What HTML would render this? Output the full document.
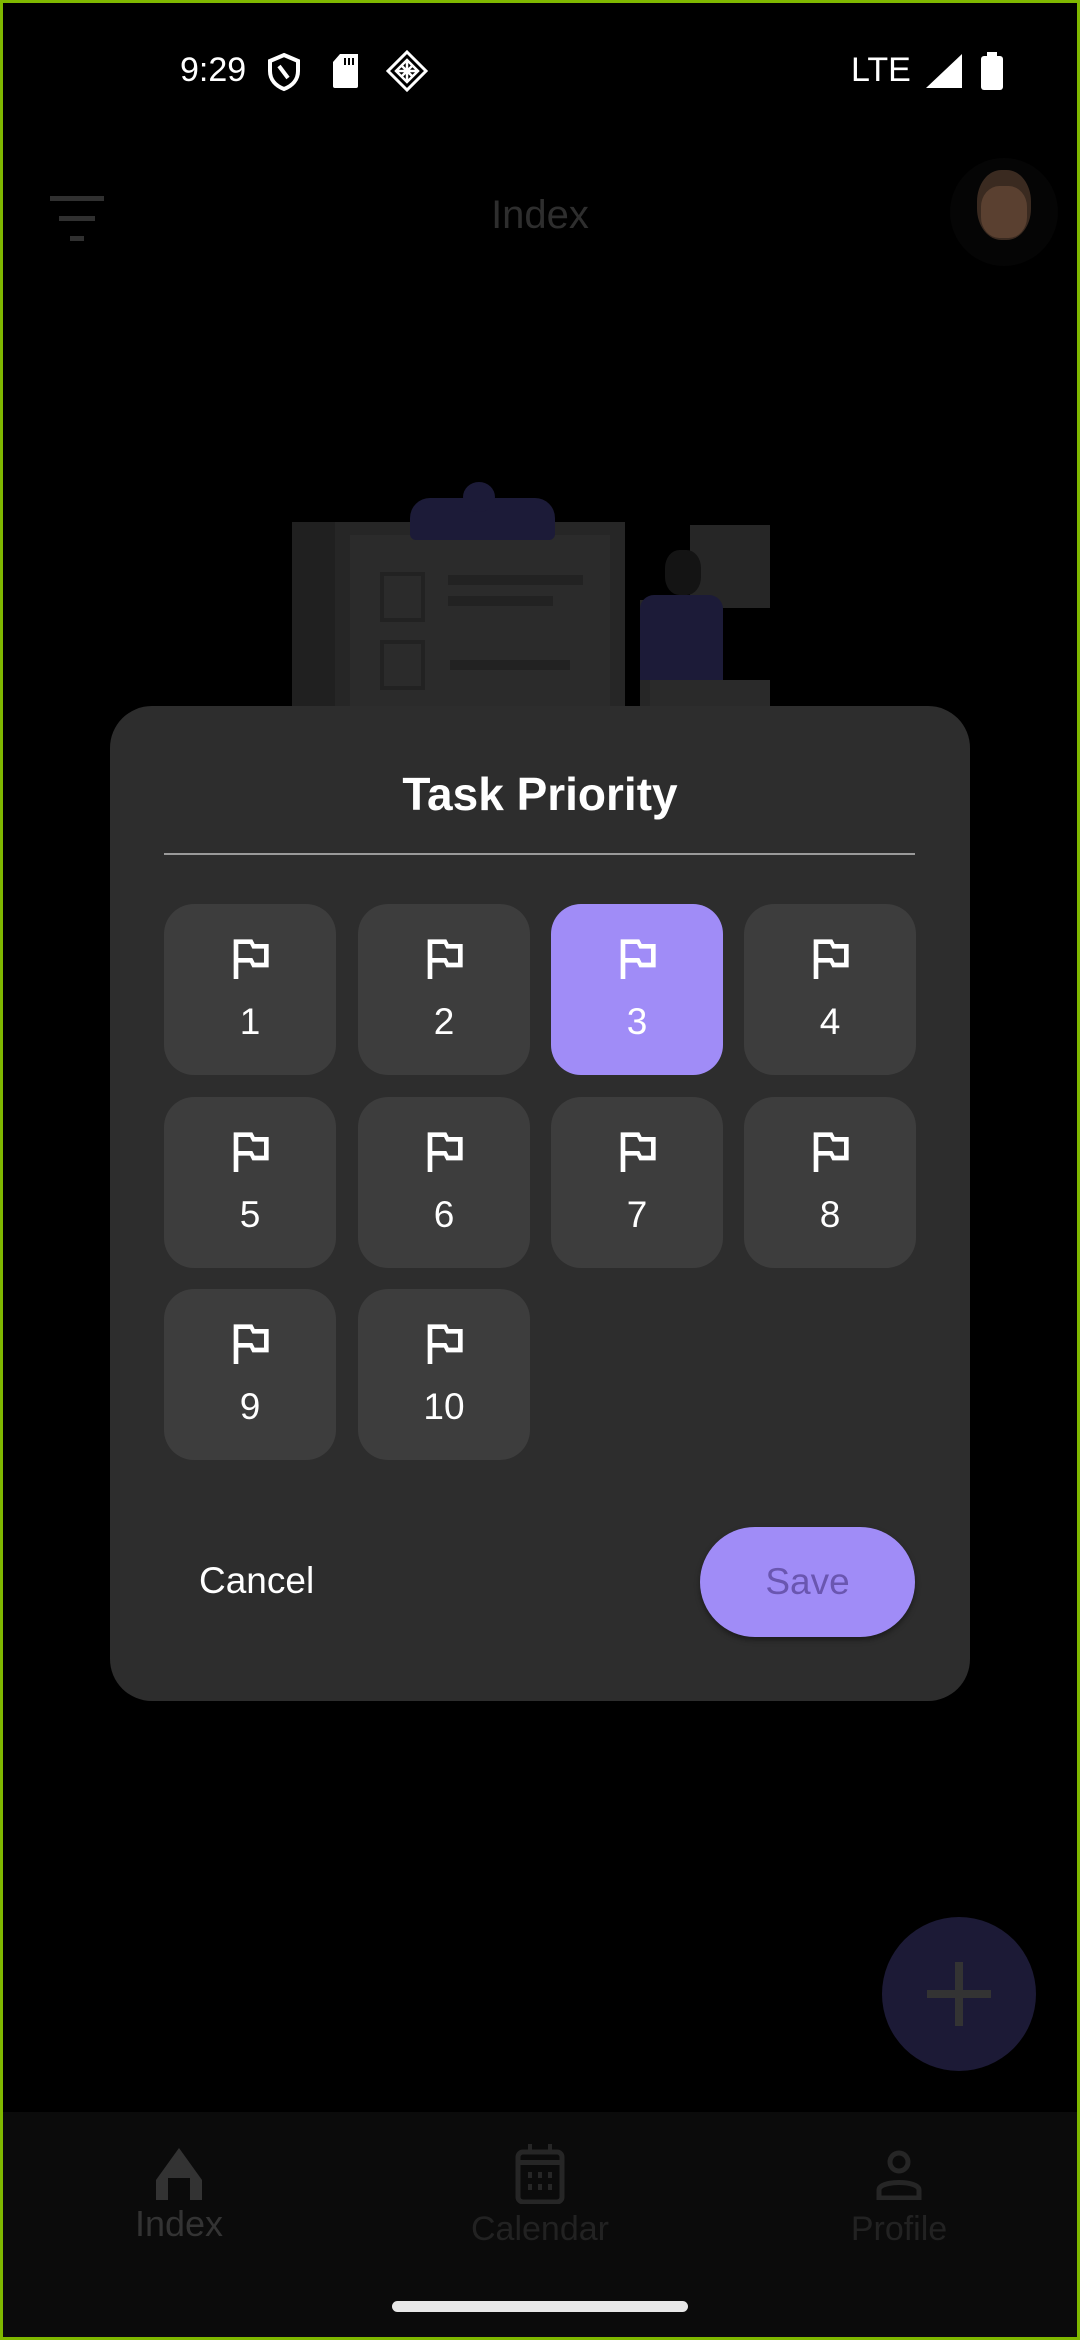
<!DOCTYPE html>
<html><head><meta charset="utf-8"><style>
*{margin:0;padding:0;box-sizing:border-box}
body{width:1080px;height:2340px;background:#000;position:relative;overflow:hidden;font-family:"Liberation Sans",Roboto,sans-serif}
.frame{position:absolute;inset:0;border:3px solid #7fb800;z-index:50;pointer-events:none}
.abs{position:absolute}
.tile{position:absolute;width:172px;height:171px;border-radius:30px;background:#3d3d3d}
.tile svg{position:absolute;left:58px;top:26px}
.tile span{position:absolute;left:0;right:0;top:96px;text-align:center;color:#fff;font-size:37px;line-height:44px}
.sel{background:#a08cf7}
</style></head><body>
<div class="frame"></div>
<!-- status bar -->
<div class="abs" style="left:180px;top:48px;color:#fff;font-size:34px;line-height:44px">9:29</div>
<svg class="abs" style="left:266px;top:52px" width="36" height="40" viewBox="0 0 36 40"><path d="M18 3 L32 9 V19 C32 28 26 34 18 37 C10 34 4 28 4 19 V9 Z" fill="none" stroke="#fff" stroke-width="4"/><path d="M13 14 L22 26" stroke="#fff" stroke-width="4"/></svg>
<svg class="abs" style="left:332px;top:54px" width="28" height="34" viewBox="0 0 28 34"><path d="M8 0 H26 V32 Q26 34 24 34 H3 Q1 34 1 32 V8 Z" fill="#fff"/><rect x="12" y="4" width="2" height="7" fill="#000"/><rect x="16" y="4" width="2" height="7" fill="#000"/><rect x="20" y="4" width="2" height="7" fill="#000"/></svg>
<svg class="abs" style="left:386px;top:50px" width="42" height="42" viewBox="0 0 42 42"><path d="M21 2 L40 21 L21 40 L2 21 Z" fill="none" stroke="#fff" stroke-width="3"/><path d="M21 10 L32 21 L21 32 L10 21 Z M10 21 H32 M21 10 V32 M15 15 L27 27 M27 15 L15 27" fill="none" stroke="#fff" stroke-width="2.5"/></svg>
<div class="abs" style="left:851px;top:48px;color:#fff;font-size:34px;line-height:44px">LTE</div>
<svg class="abs" style="left:926px;top:54px" width="36" height="34"><path d="M36 0 V34 H0 Z" fill="#fff"/></svg>
<svg class="abs" style="left:981px;top:52px" width="22" height="38"><rect x="6" y="0" width="10" height="5" fill="#fff"/><rect x="0" y="4" width="22" height="34" rx="3" fill="#fff"/></svg>
<!-- app bar -->
<div class="abs" style="left:50px;top:196px;width:54px;height:5px;background:#303030"></div>
<div class="abs" style="left:59px;top:216px;width:36px;height:5px;background:#303030"></div>
<div class="abs" style="left:70px;top:336px;width:14px;height:5px;background:#303030;top:336px;display:none"></div>
<div class="abs" style="left:70px;top:236px;width:14px;height:5px;background:#303030"></div>
<div class="abs" style="left:0;width:1080px;top:190px;text-align:center;color:#2e2e2e;font-size:40px;line-height:50px">Index</div>
<div class="abs" style="left:950px;top:158px;width:108px;height:108px;border-radius:50%;background:#050505"></div>
<div class="abs" style="left:977px;top:170px;width:54px;height:70px;border-radius:45%;background:#3a2a20"></div>
<div class="abs" style="left:981px;top:186px;width:46px;height:52px;border-radius:40%;background:#5a4030"></div>
<!-- illustration (dimmed) -->
<div class="abs" style="left:292px;top:522px;width:45px;height:185px;background:#202020"></div>
<div class="abs" style="left:335px;top:522px;width:290px;height:185px;background:#262626"></div>
<div class="abs" style="left:350px;top:535px;width:260px;height:172px;background:#2b2b2b"></div>
<div class="abs" style="left:410px;top:498px;width:145px;height:42px;border-radius:20px 20px 6px 6px;background:#1c1b38"></div>
<div class="abs" style="left:463px;top:482px;width:32px;height:30px;border-radius:50%;background:#1c1b38"></div>
<div class="abs" style="left:380px;top:572px;width:45px;height:50px;border:4px solid #222"></div>
<div class="abs" style="left:380px;top:640px;width:45px;height:50px;border:4px solid #222"></div>
<div class="abs" style="left:448px;top:575px;width:135px;height:10px;background:#222"></div>
<div class="abs" style="left:448px;top:596px;width:105px;height:10px;background:#222"></div>
<div class="abs" style="left:450px;top:660px;width:120px;height:10px;background:#222"></div>
<div class="abs" style="left:690px;top:525px;width:80px;height:83px;background:#262626"></div>
<div class="abs" style="left:640px;top:600px;width:50px;height:107px;background:#262626"></div>
<div class="abs" style="left:640px;top:595px;width:83px;height:85px;border-radius:14px 14px 0 0;background:#1c1b38"></div>
<div class="abs" style="left:665px;top:550px;width:36px;height:45px;border-radius:40%;background:#141414"></div>
<div class="abs" style="left:650px;top:680px;width:120px;height:27px;background:#2a2a2a"></div>
<!-- dialog -->
<div class="abs" style="left:110px;top:706px;width:860px;height:995px;border-radius:42px;background:#2d2d2d"></div>
<div class="abs" style="left:110px;top:764px;width:860px;text-align:center;color:#fff;font-size:46px;font-weight:bold;line-height:60px">Task Priority</div>
<div class="abs" style="left:164px;top:853px;width:751px;height:2px;background:#9a9a9a"></div>
<svg width="0" height="0" style="position:absolute"><defs><path id="fl" d="M14 6l-1-2H5v17h2v-7h5l1 2h7V6h-6zm4 8h-4l-1-2H7V6h5l1 2h5v6z" fill="#fff"/></defs></svg>
<div class="tile" style="left:164px;top:904px"><svg width="56" height="56" viewBox="0 0 24 24"><use href="#fl"/></svg><span>1</span></div>
<div class="tile" style="left:358px;top:904px"><svg width="56" height="56" viewBox="0 0 24 24"><use href="#fl"/></svg><span>2</span></div>
<div class="tile sel" style="left:551px;top:904px"><svg width="56" height="56" viewBox="0 0 24 24"><use href="#fl"/></svg><span>3</span></div>
<div class="tile" style="left:744px;top:904px"><svg width="56" height="56" viewBox="0 0 24 24"><use href="#fl"/></svg><span>4</span></div>
<div class="tile" style="left:164px;top:1097px"><svg width="56" height="56" viewBox="0 0 24 24"><use href="#fl"/></svg><span>5</span></div>
<div class="tile" style="left:358px;top:1097px"><svg width="56" height="56" viewBox="0 0 24 24"><use href="#fl"/></svg><span>6</span></div>
<div class="tile" style="left:551px;top:1097px"><svg width="56" height="56" viewBox="0 0 24 24"><use href="#fl"/></svg><span>7</span></div>
<div class="tile" style="left:744px;top:1097px"><svg width="56" height="56" viewBox="0 0 24 24"><use href="#fl"/></svg><span>8</span></div>
<div class="tile" style="left:164px;top:1289px"><svg width="56" height="56" viewBox="0 0 24 24"><use href="#fl"/></svg><span>9</span></div>
<div class="tile" style="left:358px;top:1289px"><svg width="56" height="56" viewBox="0 0 24 24"><use href="#fl"/></svg><span>10</span></div>
<div class="abs" style="left:199px;top:1557px;color:#fff;font-size:37px;font-weight:500;line-height:48px">Cancel</div>
<div class="abs" style="left:700px;top:1527px;width:215px;height:110px;border-radius:55px;background:#a08cf7;box-shadow:0 3px 6px rgba(0,0,0,.4);text-align:center;line-height:110px;color:#6a56b0;font-size:37px;font-weight:500">Save</div>
<!-- FAB -->
<div class="abs" style="left:882px;top:1917px;width:154px;height:154px;border-radius:50%;background:#1c1a36;box-shadow:0 6px 12px rgba(0,0,0,.6)"></div>
<div class="abs" style="left:927px;top:1990px;width:64px;height:8px;background:#333"></div>
<div class="abs" style="left:955px;top:1962px;width:8px;height:64px;background:#333"></div>
<!-- bottom nav -->
<div class="abs" style="left:0;top:2112px;width:1080px;height:228px;background:#0b0b0b"></div>
<svg class="abs" style="left:156px;top:2148px" width="46" height="52" viewBox="0 0 46 52"><path d="M23 0 L46 32 V52 H34 V30 H12 V52 H0 V32 Z" fill="#333"/></svg>
<div class="abs" style="left:79px;top:2200px;width:200px;text-align:center;color:#333;font-size:36px;line-height:48px">Index</div>
<svg class="abs" style="left:515px;top:2144px" width="50" height="60" viewBox="0 0 50 60"><rect x="3" y="8" width="44" height="50" rx="5" fill="none" stroke="#262626" stroke-width="5"/><rect x="3" y="16" width="44" height="5" fill="#262626"/><rect x="13" y="0" width="4" height="10" fill="#262626"/><rect x="33" y="0" width="4" height="10" fill="#262626"/><g fill="#262626"><rect x="13" y="28" width="4" height="6"/><rect x="23" y="28" width="4" height="6"/><rect x="33" y="28" width="4" height="6"/><rect x="13" y="40" width="4" height="6"/><rect x="23" y="40" width="4" height="6"/><rect x="33" y="40" width="4" height="6"/></g></svg>
<div class="abs" style="left:440px;top:2205px;width:200px;text-align:center;color:#222;font-size:34px;line-height:48px">Calendar</div>
<svg class="abs" style="left:876px;top:2150px" width="46" height="50" viewBox="0 0 46 50"><circle cx="23" cy="12" r="9" fill="none" stroke="#262626" stroke-width="5"/><path d="M3 48 V40 C3 30 43 30 43 40 V48 Z" fill="none" stroke="#262626" stroke-width="5"/></svg>
<div class="abs" style="left:799px;top:2205px;width:200px;text-align:center;color:#222;font-size:34px;line-height:48px">Profile</div>
<div class="abs" style="left:392px;top:2301px;width:296px;height:11px;border-radius:6px;background:#e8e8e8"></div>
</body></html>
